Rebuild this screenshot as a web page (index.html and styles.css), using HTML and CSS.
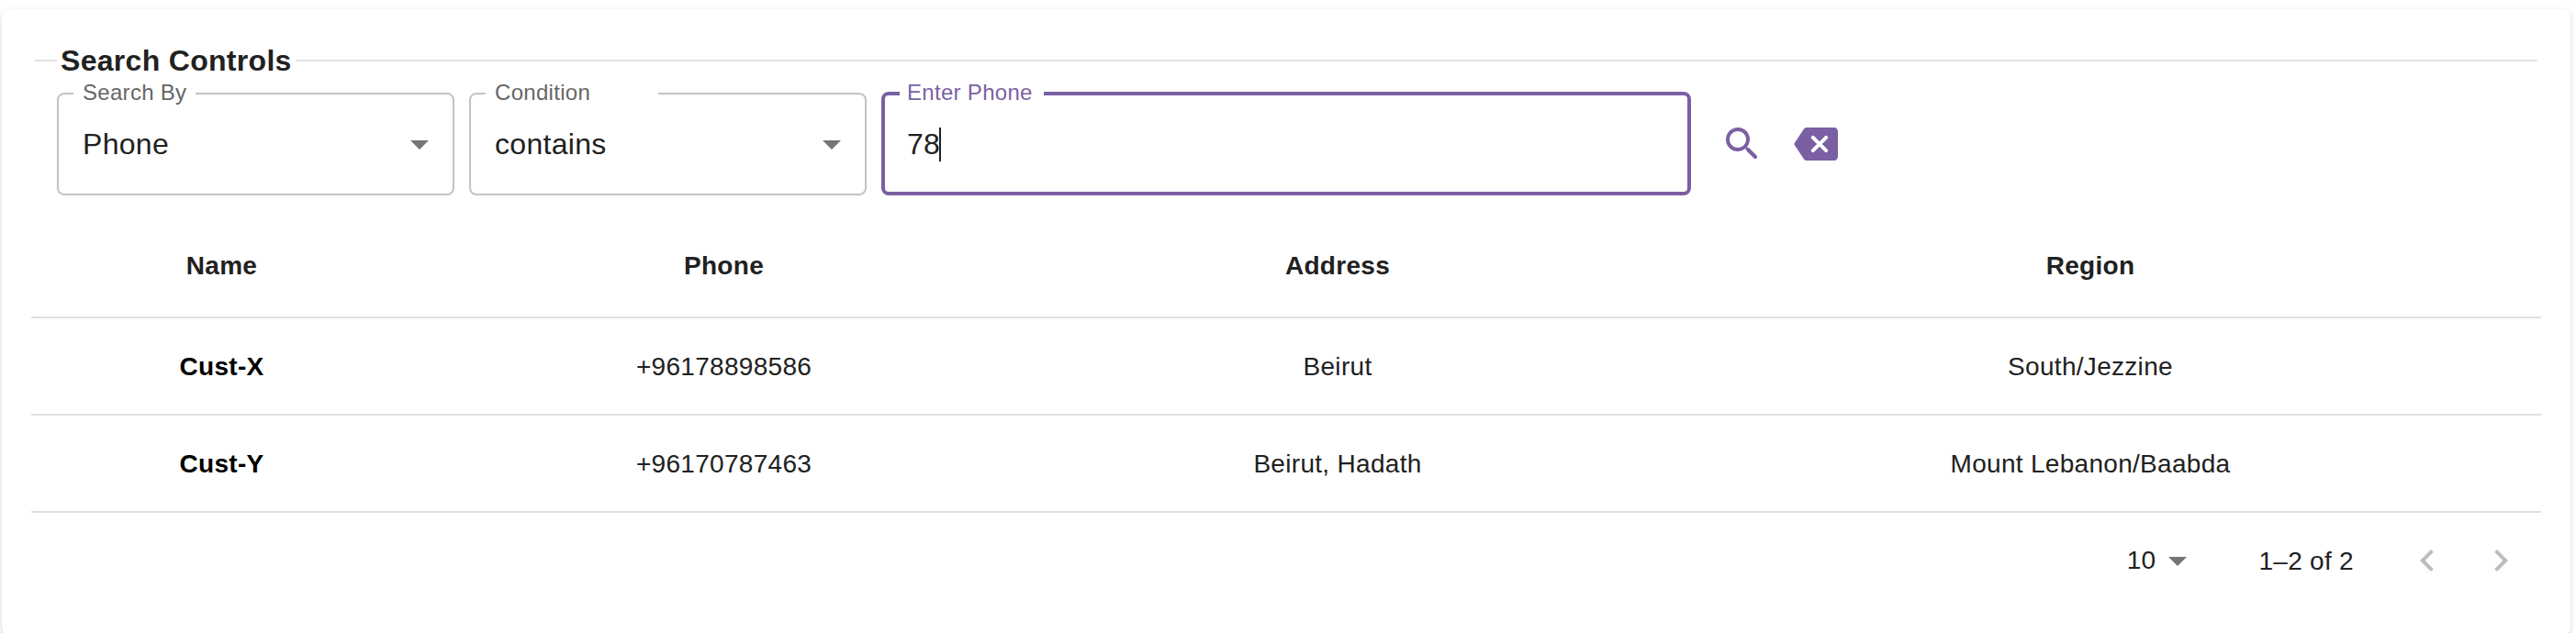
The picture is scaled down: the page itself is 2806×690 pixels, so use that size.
FILE: index.html
```html
<!DOCTYPE html>
<html lang="en">
<head>
<meta charset="utf-8">
<title>Customers</title>
<link rel="stylesheet" href="styles.css">
</head>
<body>
<main class="card">
  <div class="divider"><h2 class="divider-title">Search Controls</h2></div>
  <form class="controls">
    <div class="field">
      <label class="field-label label-search-by">Search By</label>
      <span class="field-value">Phone</span>
      <svg class="caret" viewBox="0 0 20 10"><path d="M0 0l10 10L20 0z"/></svg>
    </div>
    <div class="field">
      <label class="field-label label-condition">Condition</label>
      <span class="field-value">contains</span>
      <svg class="caret" viewBox="0 0 20 10"><path d="M0 0l10 10L20 0z"/></svg>
    </div>
    <div class="field focused">
      <label class="field-label label-phone">Enter Phone</label>
      <span class="field-value">78</span><span class="cursor"></span>
    </div>
    <svg class="icon search" viewBox="0 0 24 24"><path d="M15.5 14h-.79l-.28-.27c1.2-1.4 1.82-3.31 1.48-5.34-.47-2.78-2.79-5-5.59-5.34-4.23-.52-7.79 3.04-7.27 7.27.34 2.8 2.56 5.12 5.34 5.59 2.03.34 3.94-.28 5.34-1.48l.27.28v.79l4.25 4.25c.41.41 1.08.41 1.49 0 .41-.41.41-1.08 0-1.49L15.5 14zm-6 0C7.01 14 5 11.99 5 9.5S7.01 5 9.5 5 14 7.01 14 9.5 11.99 14 9.5 14z"/></svg>
    <svg class="icon clear" viewBox="0 0 24 24"><path d="M22 3H7c-.69 0-1.23.35-1.59.88L.37 11.45c-.22.34-.22.77 0 1.11l5.04 7.56c.36.52.9.88 1.59.88h15c1.1 0 2-.9 2-2V5c0-1.1-.9-2-2-2zm-3.7 13.3c-.39.39-1.02.39-1.41 0L14 13.41l-2.89 2.89c-.39.39-1.02.39-1.41 0-.39-.39-.39-1.02 0-1.41L12.59 12 9.7 9.11c-.39-.39-.39-1.02 0-1.41.39-.39 1.02-.39 1.41 0L14 10.59l2.89-2.89c.39-.39 1.02-.39 1.41 0 .39.39.39 1.02 0 1.41L15.41 12l2.89 2.89c.38.38.38 1.02 0 1.41z"/></svg>
  </form>
  <table class="table">
    <colgroup><col class="col-name"><col class="col-phone"><col class="col-address"><col class="col-region"></colgroup>
    <thead>
      <tr><th>Name</th><th>Phone</th><th>Address</th><th>Region</th></tr>
    </thead>
    <tbody>
      <tr><td class="name">Cust-X</td><td>+96178898586</td><td>Beirut</td><td>South/Jezzine</td></tr>
      <tr><td class="name">Cust-Y</td><td>+96170787463</td><td>Beirut, Hadath</td><td>Mount Lebanon/Baabda</td></tr>
    </tbody>
  </table>
  <footer class="pagination">
    <span class="page-size">10</span>
    <svg class="caret" viewBox="0 0 20 10"><path d="M0 0l10 10L20 0z"/></svg>
    <span class="page-range">1–2 of 2</span>
    <svg class="arrow" viewBox="0 0 24 24"><path d="M15.41 16.59L10.83 12l4.58-4.59L14 6l-6 6 6 6z"/></svg>
    <svg class="arrow" viewBox="0 0 24 24"><path d="M8.59 16.59L13.17 12 8.59 7.41 10 6l6 6-6 6z"/></svg>
  </footer>
</main>
</body>
</html>
```
FILE: styles.css
```css
* { box-sizing: border-box; }

html { height: 100%; overflow: hidden; }

body {
  margin: 0;
  height: 690px;
  padding: 10px 6px 0 2px;
  overflow: hidden;
  background: #fff;
  color: #212121;
  font-family: "Liberation Sans", Arial, sans-serif;
}

.card {
  height: 683px;
  padding-top: 37px;
  border-radius: 8px;
  background: #fff;
  box-shadow: 0 4px 2px -2px rgba(0, 0, 0, .2), 0 2px 2px rgba(0, 0, 0, .14), 0 2px 6px rgba(0, 0, 0, .12);
}

.divider {
  display: flex;
  align-items: center;
  height: 38px;
  margin: 0 36px;
}
.divider::before, .divider::after { content: ""; height: 2px; background: #e3e3e3; }
.divider::before { width: 24px; }
.divider::after { flex: 1; }
.divider-title {
  width: 260px;
  margin: 0;
  padding-left: 4px;
  font-size: 32px;
  line-height: 38px;
  letter-spacing: .00938em;
  white-space: nowrap;
}

.controls {
  display: flex;
  align-items: center;
  height: 112px;
  margin: 16px 0 0 60px;
}

.field {
  position: relative;
  display: flex;
  align-items: center;
  width: 433px;
  height: 112px;
  margin-right: 16px;
  padding: 0 26px;
  border: 2px solid #c4c4c4;
  border-radius: 8px;
  font-size: 32px;
  line-height: 38px;
  letter-spacing: .00938em;
}
.field-value { flex: none; }
.field .caret { margin: 2px 0 0 auto; }
.field-label {
  position: absolute;
  top: -16px;
  left: 16px;
  padding-left: 10px;
  background: #fff;
  color: #666;
  font-size: 24px;
  line-height: 28px;
  white-space: nowrap;
}
.label-search-by { width: 133px; }
.label-condition { width: 188px; }
.focused {
  width: 882px;
  height: 113px;
  margin: -1px 0 0;
  padding: 1px 24px 0;
  border: 4px solid #7b5fa3;
}
.focused .field-label { top: -17px; color: #7b5fa3; }
.label-phone { width: 157px; padding-left: 8px; }
.cursor { width: 2px; height: 37px; margin-left: -1px; background: #212121; }

.caret { flex: none; width: 20px; height: 10px; fill: #757575; }
.icon { flex: none; width: 48px; height: 48px; fill: #7b5fa3; }
.search { margin-left: 32px; }
.clear { margin-left: 32px; }

.table {
  width: 2734px;
  margin: 21px 0 0 32px;
  table-layout: fixed;
  border-collapse: separate;
  border-spacing: 0;
  font-size: 28px;
  line-height: 40px;
  letter-spacing: .01071em;
}
.col-name { width: 415px; }
.col-phone { width: 679px; }
.col-address { width: 658px; }
.col-region { width: 982px; }
.table th, .table td {
  height: 106px;
  padding: 2px 0 0;
  border-bottom: 2px solid #e0e0e0;
  text-align: center;
  vertical-align: middle;
}
.table th { height: 113px; padding-top: 1px; }
.name { color: #000; font-weight: 700; }

.pagination {
  display: flex;
  align-items: center;
  justify-content: flex-end;
  height: 106px;
  padding-right: 52px;
  font-size: 28px;
  line-height: 40px;
  letter-spacing: .01071em;
}
.page-size { margin: -2px 14px 0 0; }
.page-range { margin: 0 56px 0 78px; }
.arrow { flex: none; width: 48px; height: 48px; margin-top: -2px; fill: #bdbdbd; }
.arrow + .arrow { margin-left: 32px; }
```
